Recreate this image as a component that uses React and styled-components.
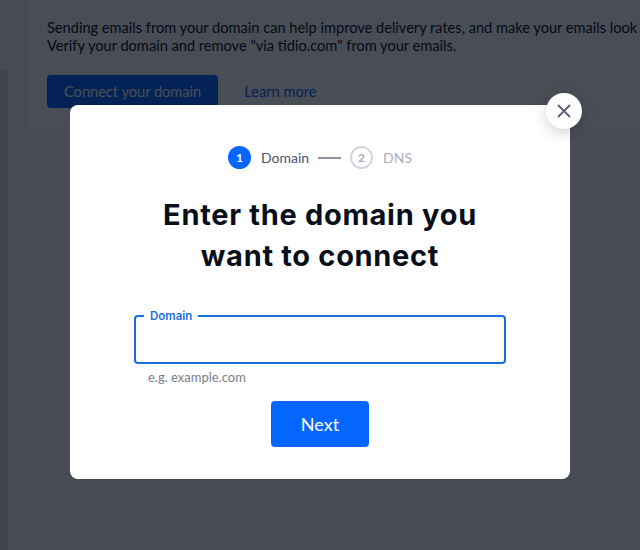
import React, { useState } from "react";
import styled, { createGlobalStyle } from "styled-components";

const GlobalStyle = createGlobalStyle`
  html, body {
    margin: 0;
    padding: 0;
    background: #ffffff;
    font-family: Lato, "Noto Sans", sans-serif;
  }
`;

// page behind the dialog
const Page = styled.div`
  display: flex;
  height: 550px;
  overflow: hidden;
  background: #f6f7f9;
`;

const SideEdge = styled.div`
  width: 8px;
  margin-top: 70px;
  background: #d6d9df;
`;

const Content = styled.main`
  flex: 1;
  min-width: 0;
  padding: 0 0 0 18px;
`;

const Card = styled.section`
  background: #ffffff;
  border-left: 1px solid #eceef1;
  padding: 19px 0 24px 20px;
  white-space: nowrap;
  overflow: hidden;

  p {
    margin: 0;
    font-size: 14.6px;
    line-height: 18px;
    color: #080f1a;
  }
`;

const Actions = styled.div`
  display: flex;
  align-items: center;
  gap: 26px;
  margin-top: 20px;
`;

const PrimaryBtn = styled.button`
  font-family: inherit;
  font-size: ${(p) => p.$size || 14.6}px;
  height: ${(p) => p.$h || 33}px;
  padding: 0 ${(p) => p.$px || 17}px;
  color: #ffffff;
  background: #0566ff;
  border: none;
  border-radius: 4px;
  cursor: pointer;
`;

const LinkBtn = styled.a`
  font-size: 14.6px;
  color: #0566ff;
  text-decoration: none;
`;

// dialog
const Overlay = styled.div`
  position: fixed;
  inset: 0;
  background: rgba(3, 8, 20, 0.72);
  display: flex;
  justify-content: center;
  align-items: flex-start;
  padding-top: 105px;
`;

const Modal = styled.div`
  position: relative;
  width: 500px;
  background: #ffffff;
  border-radius: 8px;
  padding: 41px 0 32px;
  display: flex;
  flex-direction: column;
  align-items: center;
  box-sizing: border-box;
`;

const CloseBtn = styled.button`
  position: absolute;
  top: -12px;
  right: -12px;
  width: 36px;
  height: 36px;
  border-radius: 50%;
  border: none;
  background: #ffffff;
  box-shadow: 0 4px 14px rgba(0, 0, 0, 0.18);
  display: flex;
  align-items: center;
  justify-content: center;
  cursor: pointer;
  padding: 0;
`;

const Stepper = styled.ol`
  list-style: none;
  margin: 0;
  padding: 0;
  display: flex;
  align-items: center;
  gap: 9px;
  height: 23px;
`;

const Step = styled.li`
  display: flex;
  align-items: center;
  gap: 10px;
  font-size: 14px;
  color: ${(p) => (p.$active ? "#4c5466" : "#a9adb8")};
`;

const StepNum = styled.span`
  width: 23px;
  height: 23px;
  box-sizing: border-box;
  border-radius: 50%;
  display: flex;
  align-items: center;
  justify-content: center;
  font-size: 12px;
  font-weight: 700;
  color: ${(p) => (p.$active ? "#ffffff" : "#a9adb8")};
  background: ${(p) => (p.$active ? "#0566ff" : "#ffffff")};
  border: ${(p) => (p.$active ? "none" : "2px solid #d3d6dc")};
`;

const StepLine = styled.span`
  width: 23px;
  height: 2px;
  background: #8c91a0;
`;

const Title = styled.h1`
  margin: 25px 0 0;
  font-family: Inter, Lato, sans-serif;
  font-size: 29px;
  line-height: 41px;
  font-weight: 700;
  letter-spacing: 0.7px;
  color: #080f1a;
  text-align: center;
`;

const Field = styled.fieldset`
  margin: 34px 0 0;
  width: 372px;
  height: 54px;
  box-sizing: border-box;
  border: 2px solid #1a6fe0;
  border-radius: 4px;
  padding: 0 8px;
  display: flex;

  legend {
    padding: 0 6px;
    margin-left: 0;
    font-family: Inter, Lato, sans-serif;
    font-size: 11.5px;
    font-weight: 600;
    color: #1a6fe0;
    line-height: 12px;
  }

  input {
    flex: 1;
    border: none;
    outline: none;
    font-family: inherit;
    font-size: 14px;
    padding: 0 6px;
    background: transparent;
  }
`;

const Hint = styled.div`
  width: 344px;
  margin-top: 6px;
  font-size: 13px;
  line-height: 14px;
  color: #7a7f8c;
`;

const NextRow = styled.div`
  margin-top: 17px;
`;

export default function App() {
  const [domain, setDomain] = useState("");

  return (
    <>
      <GlobalStyle />
      <Page>
        <SideEdge />
        <Content>
          <Card>
            <p>
              Sending emails from your domain can help improve delivery rates,
              and make your emails look
            </p>
            <p>Verify your domain and remove "via tidio.com" from your emails.</p>
            <Actions>
              <PrimaryBtn>Connect your domain</PrimaryBtn>
              <LinkBtn href="#">Learn more</LinkBtn>
            </Actions>
          </Card>
        </Content>
      </Page>

      <Overlay>
        <Modal>
          <CloseBtn aria-label="Close">
            <svg width="14" height="14" viewBox="0 0 14 14" fill="none">
              <path
                d="M1.5 1.5l11 11M12.5 1.5l-11 11"
                stroke="#5a5f7a"
                strokeWidth="1.8"
                strokeLinecap="round"
              />
            </svg>
          </CloseBtn>

          <Stepper>
            <Step $active>
              <StepNum $active>1</StepNum>
              Domain
            </Step>
            <StepLine />
            <Step>
              <StepNum>2</StepNum>
              DNS
            </Step>
          </Stepper>

          <Title>
            Enter the domain you
            <br />
            want to connect
          </Title>

          <Field>
            <legend>Domain</legend>
            <input
              value={domain}
              onChange={(e) => setDomain(e.target.value)}
            />
          </Field>
          <Hint>e.g. example.com</Hint>

          <NextRow>
            <PrimaryBtn $size={18} $h={46} $px={30}>
              Next
            </PrimaryBtn>
          </NextRow>
        </Modal>
      </Overlay>
    </>
  );
}
